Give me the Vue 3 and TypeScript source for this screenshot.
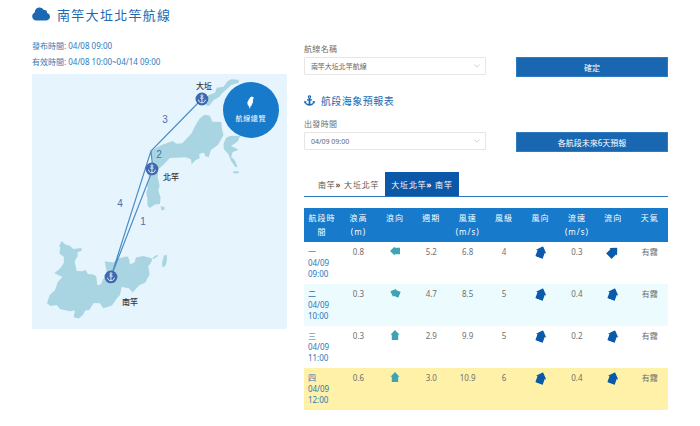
<script setup lang="ts">
import { ref } from 'vue'

interface Forecast {
  day: string
  date: string
  time: string
  waveHeight: string
  waveDir: number
  period: string
  windSpeed: string
  windLevel: number
  windDir: number
  flowSpeed: string
  flowDir: number
  weather: string
}

const headers: string[][] = [
  ['航段時間'], ['浪高', '(m)'], ['浪向'], ['週期'], ['風速', '(m/s)'],
  ['風級'], ['風向'], ['流速', '(m/s)'], ['流向'], ['天氣'],
]

const rows: Forecast[] = [
  { day: '一', date: '04/09', time: '09:00', waveHeight: '0.8', waveDir: -90, period: '5.2', windSpeed: '6.8', windLevel: 4, windDir: 20, flowSpeed: '0.3', flowDir: 45, weather: '有霧' },
  { day: '二', date: '04/09', time: '10:00', waveHeight: '0.3', waveDir: -68, period: '4.7', windSpeed: '8.5', windLevel: 5, windDir: 20, flowSpeed: '0.4', flowDir: 20, weather: '有霧' },
  { day: '三', date: '04/09', time: '11:00', waveHeight: '0.3', waveDir: 0, period: '2.9', windSpeed: '9.9', windLevel: 5, windDir: 20, flowSpeed: '0.2', flowDir: 20, weather: '有霧' },
  { day: '四', date: '04/09', time: '12:00', waveHeight: '0.6', waveDir: 0, period: '3.0', windSpeed: '10.9', windLevel: 6, windDir: 20, flowSpeed: '0.4', flowDir: 20, weather: '有霧' },
]

const tabs = [
  { from: '南竿', to: '大坵北竿' },
  { from: '大坵北竿', to: '南竿' },
]
const activeTab = ref(1)

const ports = [
  { x: 170, y: 25 },
  { x: 120, y: 95 },
  { x: 79, y: 203 },
]

const rotate = (deg: number) => ({ transform: `rotate(${deg}deg)` })
</script>

<template>
  <main class="page">
    <h1 class="title">
      <svg class="cloud" viewBox="0 0 18 14" aria-hidden="true">
        <path d="M4.4 13.4C2 13.4.2 11.600.2 9.400.2 7.600 1.300 6.200 2.800 5.600 2.700 2.700 4.800.5 7.500.5 9.400.5 11 1.500 11.800 3.100 13.500 2.500 15.200 3.700 15.100 5.500L15 6.100C16.800 6.500 18 8 18 9.800 18 11.800 16.400 13.400 14.400 13.400Z" />
      </svg>
      <span>南竿大坵北竿航線</span>
    </h1>

    <div class="columns">
      <section class="left">
        <p class="stamp">發布時間: 04/08 09:00</p>
        <p class="stamp">有效時間: 04/08 10:00~04/14 09:00</p>
        <div class="map">
          <svg class="chart" viewBox="0 0 255 255" role="img" aria-label="航線">
            <g transform="scale(.33333)" class="land">
              <g transform="translate(-6 363)">
                <path d="M95 138L106 149 119 152 130 162 154 159 156 167 142 173 143 184 134 199 140 228 156 229 167 225 174 237 190 239 199 244 202 271 213 268 219 253 232 240 224 199 250 203 266 191 291 184 298 193 300 209 314 202 318 188 340 183 366 190 362 205 355 214 359 239 346 263 328 271 308 293 297 280 275 276 270 300 261 310 246 332 220 340 210 325 191 324 178 345 166 347 159 360 146 371 131 367 135 347 119 349 90 342 80 330 61 333 51 325 59 300 75 286 83 262 97 246 73 235 91 220 101 205 102 186 88 176 91 157 87 153Z" />
                <path d="M367 190L375 183 382 180 383 184 372 190Z" />
                <circle cx="361" cy="197" r="5" />
              </g>
              <g transform="translate(354 -12)">
                <path d="M2 243L35 225 68 213 80 221 97 220 125 190 137 165 150 145 164 134 180 137 187 155 214 156 217 180 221 195 204 225 183 240 176 262 166 258 162 248 148 251 149 265 137 270 125 283 123 268 107 262 60 264 40 285 26 297 23 320 29 347 25 362 32 382 30 402 15 404 0 414 -7 408 -8 386 -11 367 -6 354 -10 343 -2 332 -5 310 10 280Z" />
                <path d="M170 82L177 75 195 68 201 53 221 50 233 34 244 28 266 29 267 38 244 45 231 57 217 69 209 80 191 91 177 108 168 106Z" />
                <path d="M228 204L240 198 271 197 264 214 244 228 266 239 248 247 244 262 253 269 263 290 257 292 244 274 235 252 222 238 221 222Z" />
                <path d="M250 304L268 304 264 311 250 310ZM32 409L44 411 44 419 35 422Z" />
                <path d="M42 557L51 555 51 572 47 587 38 593 36 580ZM9 566L22 555 23 558 11 568Z" />
              </g>
            </g>
            <path class="route" d="M170 25L119 77 79 203M119 77L121 95 79 203" />
            <g v-for="(p, i) in ports" :key="i" :transform="`translate(${p.x} ${p.y})`">
              <circle r="6.400" class="port" />
              <path class="port-anchor" d="M0-2.200V3.800M-1.800-.8H1.800M-3.400.7C-3.300 2.700-1.800 3.700 0 3.800 1.800 3.700 3.300 2.700 3.400.7" />
              <circle cy="-3.200" r="1" class="port-anchor" />
            </g>
            <g class="leg">
              <text x="133" y="49">3</text>
              <text x="127" y="84">2</text>
              <text x="88" y="133">4</text>
              <text x="111" y="151">1</text>
            </g>
            <g class="place">
              <text x="172" y="15">大坵</text>
              <text x="139" y="106">北竿</text>
              <text x="98" y="231">南竿</text>
            </g>
          </svg>
          <button type="button" class="overview">
            <svg class="taiwan" viewBox="0 0 7 13" aria-hidden="true">
              <path d="M4.800.4L6.800 1.400 5.900 4.200 6 6 4.500 9.500 3.300 10.700 3.100 12.700 2.400 12 2.200 10.700.8 9 .3 6.700 1.200 4.500 3.100 1.600Z" />
            </svg>
            <span>航線總覽</span>
          </button>
        </div>
      </section>

      <section class="right">
        <div class="form-row">
          <div class="field">
            <label for="route">航線名稱</label>
            <div class="select">
              <select id="route"><option>南竿大坵北竿航線</option></select>
              <svg viewBox="0 0 6 4" aria-hidden="true"><path d="M.5.5L3 3.200 5.500.5" /></svg>
            </div>
          </div>
          <button type="button" class="action">確定</button>
        </div>

        <h2 class="subtitle">
          <svg viewBox="0 0 12 12" aria-hidden="true">
            <path fill-rule="evenodd" d="M6 .3A1.900 1.900 0 0 1 7 3.800V4.500H8.800V6H7V9.800C8.400 9.600 9.400 8.900 9.800 8.100L8.900 7.300 11.700 6.300V9.200L10.900 8.700C10 10.500 8.200 11.700 6 11.700S2 10.500 1.100 8.700L.3 9.200V6.300L3.100 7.300 2.200 8.100C2.600 8.900 3.600 9.600 5 9.800V6H3.200V4.500H5V3.800A1.900 1.900 0 0 1 6 .3ZM6 1.500A.7.7 0 1 0 6 2.900 .7.7 0 0 0 6 1.500Z" />
          </svg>
          <span>航段海象預報表</span>
        </h2>

        <div class="form-row">
          <div class="field">
            <label for="departure">出發時間</label>
            <div class="select">
              <select id="departure"><option>04/09 09:00</option></select>
              <svg viewBox="0 0 6 4" aria-hidden="true"><path d="M.5.5L3 3.200 5.500.5" /></svg>
            </div>
          </div>
          <button type="button" class="action">各航段未來6天預報</button>
        </div>

        <div class="tabs" role="tablist">
          <button
            v-for="(t, i) in tabs"
            :key="i"
            type="button"
            role="tab"
            class="tab"
            :class="{ active: activeTab === i }"
            :aria-selected="activeTab === i"
            @click="activeTab = i"
          >{{ t.from }}<b>»</b> {{ t.to }}</button>
        </div>

        <table class="forecast">
          <thead>
            <tr>
              <th v-for="h in headers" :key="h[0]" scope="col">
                <template v-for="(line, i) in h" :key="i"><br v-if="i">{{ line }}</template>
              </th>
            </tr>
          </thead>
          <tbody>
            <tr v-for="(r, i) in rows" :key="r.time" :class="{ even: i === 1, warn: i === 3 }">
              <td class="when">{{ r.day }}<br>{{ r.date }}<br>{{ r.time }}</td>
              <td>{{ r.waveHeight }}</td>
              <td><svg class="arrow wave" :style="rotate(r.waveDir)" viewBox="0 0 10 10"><path d="M5 0L9.500 4.700H8.200V10H1.800V4.700H.5Z" /></svg></td>
              <td>{{ r.period }}</td>
              <td>{{ r.windSpeed }}</td>
              <td>{{ r.windLevel }}</td>
              <td><svg class="arrow" :style="rotate(r.windDir)" viewBox="0 0 10 10"><path d="M5 0L9.500 4.700H8.200V10H1.800V4.700H.5Z" /></svg></td>
              <td>{{ r.flowSpeed }}</td>
              <td><svg class="arrow" :style="rotate(r.flowDir)" viewBox="0 0 10 10"><path d="M5 0L9.500 4.700H8.200V10H1.800V4.700H.5Z" /></svg></td>
              <td>{{ r.weather }}</td>
            </tr>
          </tbody>
        </table>
      </section>
    </div>
  </main>
</template>

<style>
body {
  background: #fff;
}
</style>

<style scoped>
.page {
  padding: 4px 32px 14px;
  font-family: "Noto Sans", "Noto Sans CJK TC", sans-serif;
  font-size: 8px;
  color: #6f6f6f;
}
h1, h2, p {
  margin: 0;
  font-weight: 400;
}
button, select {
  font: inherit;
}
.title {
  display: flex;
  align-items: center;
  gap: 7px;
  height: 20px;
  font-size: 13px;
  letter-spacing: 0.1em;
  color: #1b69b3;
}
.cloud {
  width: 18px;
  height: 14px;
  fill: #1b69b3;
}
.columns {
  display: grid;
  grid-template-columns: minmax(0, 7fr) minmax(0, 10fr);
  gap: 17px;
  align-items: start;
  margin-top: 14px;
}
.stamp {
  line-height: 16px;
  color: #3478b8;
}
.map {
  position: relative;
  margin-top: 4px;
  background: #e6f4fe;
  border-radius: 2px;
}
.chart {
  display: block;
  width: 100%;
}
.land {
  fill: #a9d5e2;
}
.route {
  fill: none;
  stroke: #4a8dc6;
  stroke-width: 1.2;
}
.port {
  fill: #3f68ae;
}
.port-anchor {
  fill: none;
  stroke: #dcebf8;
  stroke-width: 1;
}
.leg {
  font-family: "Liberation Sans", sans-serif;
  font-size: 10px;
  fill: #4670b0;
  text-anchor: middle;
}
.place {
  font-size: 8px;
  font-weight: 500;
  fill: #333;
  text-anchor: middle;
}
.overview {
  position: absolute;
  top: 8px;
  right: 8px;
  display: flex;
  flex-direction: column;
  align-items: center;
  justify-content: center;
  gap: 5px;
  width: 56px;
  height: 56px;
  padding: 0;
  border: 0;
  border-radius: 50%;
  background: #187aca;
  color: #fff;
  font-size: 7px;
  line-height: 10px;
  letter-spacing: 0.1em;
}
.taiwan {
  width: 7px;
  height: 13px;
  fill: #fff;
}
.right {
  padding-top: 5px;
}
.form-row {
  display: grid;
  grid-template-columns: 6fr 5fr;
  gap: 30px;
  align-items: end;
}
.field label {
  display: block;
  margin-bottom: 2px;
  line-height: 12px;
  letter-spacing: 0.05em;
}
.select {
  position: relative;
  height: 18px;
  margin-bottom: 2px;
}
.select select {
  display: block;
  width: 100%;
  height: 100%;
  padding: 0 6px;
  border: 1px solid #e6e6e6;
  border-radius: 1px;
  background: #fff;
  color: #666;
  font-size: 7px;
  appearance: none;
}
.select svg {
  position: absolute;
  top: 7px;
  right: 6px;
  width: 6px;
  height: 4px;
  fill: none;
  stroke: #bbb;
  stroke-width: 0.7;
  pointer-events: none;
}
.action {
  height: 20px;
  padding: 0;
  border: 1px solid #2f7ac0;
  background: #1a67b1;
  color: #fff;
}
.subtitle {
  display: flex;
  align-items: center;
  gap: 6px;
  height: 16px;
  margin: 15px 0 10px;
  font-size: 10px;
  letter-spacing: 0.05em;
  color: #1b69b3;
}
.subtitle svg {
  width: 11px;
  height: 11px;
  fill: #1b69b3;
}
.tabs {
  display: flex;
  margin-top: 20px;
  padding-left: 8px;
  border-bottom: 1px solid #2a78c0;
}
.tab {
  height: 24px;
  padding: 0 6px;
  border: 0;
  background: none;
  color: #555;
  letter-spacing: 0.1em;
}
.tab.active {
  background: #0b57a8;
  color: #fff;
}
.forecast {
  width: 100%;
  margin-top: 11px;
  border-collapse: collapse;
  table-layout: fixed;
  text-align: center;
}
.forecast th {
  padding: 3px 4px;
  background: #187aca;
  color: #fff;
  font-weight: 400;
  line-height: 14px;
  letter-spacing: 1px;
  vertical-align: top;
}
.forecast td {
  padding: 4px 4px 5px;
  line-height: 11px;
  vertical-align: top;
}
.forecast .when {
  text-align: left;
  color: #2f73b5;
}
.even {
  background: #ecfbfe;
}
.warn {
  background: #fff2a8;
}
.arrow {
  display: block;
  width: 12px;
  height: 12px;
  margin: 0 auto;
  fill: #0a5aab;
}
.arrow.wave {
  width: 10px;
  height: 10px;
  fill: #3fa3b3;
}
</style>
